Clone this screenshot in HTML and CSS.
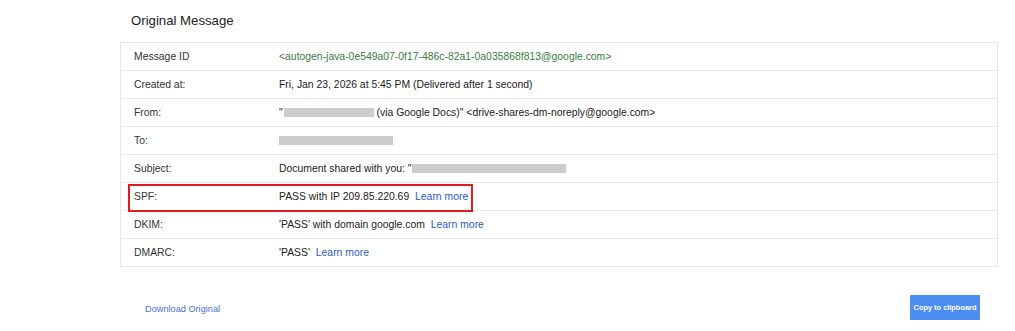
FILE: index.html
```html
<!DOCTYPE html>
<html lang="en">
<head>
  <meta charset="UTF-8">
  <title>Original Message</title>
  <link rel="stylesheet" href="styles.css">
</head>
<body>
  <article class="original">
    <h2 class="title">Original Message</h2>
    <div class="details">
      <table>
        <tr>
          <th>Message ID</th>
          <td class="msgid">&lt;autogen-java-0e549a07-0f17-486c-82a1-0a035868f813@google.com&gt;</td>
        </tr>
        <tr>
          <th>Created at:</th>
          <td>Fri, Jan 23, 2026 at 5:45 PM (Delivered after 1 second)</td>
        </tr>
        <tr>
          <th>From:</th>
          <td>"<span class="redact from-name"></span> (via Google Docs)" &lt;drive-shares-dm-noreply@google.com&gt;</td>
        </tr>
        <tr>
          <th>To:</th>
          <td><span class="redact to-addr"></span></td>
        </tr>
        <tr>
          <th>Subject:</th>
          <td>Document shared with you: "<span class="redact subject"></span></td>
        </tr>
        <tr class="spf">
          <th>SPF:</th>
          <td>PASS with IP 209.85.220.69 <a href="#">Learn more</a></td>
        </tr>
        <tr>
          <th>DKIM:</th>
          <td>'PASS' with domain google.com <a href="#">Learn more</a></td>
        </tr>
        <tr>
          <th>DMARC:</th>
          <td>'PASS' <a href="#">Learn more</a></td>
        </tr>
      </table>
      <!-- annotation drawn over the SPF row -->
      <div class="highlight"></div>
    </div>

    <div class="actions">
      <a href="#" class="download">Download Original</a>
      <button type="button" class="copy">Copy to clipboard</button>
    </div>
  </article>
</body>
</html>
```

FILE: styles.css
```css
body {
  margin: 0;
  background-color: #fff;
  font-family: "Liberation Sans", Arial, sans-serif;
  color: #222;
}

.original {
  width: 878px;
  margin-left: 120px;
}

.title {
  margin: 0;
  padding: 13px 0 0 11px;
  height: 29px;
  font-size: 13.2px;
  font-weight: normal;
  color: #222;
}

.details {
  position: relative;
}

table {
  width: 100%;
  border-collapse: collapse;
  border: 1px solid #e8e8e8;
  font-size: 10.4px;
}

tr {
  height: 28px;
  border-bottom: 1px solid #e8e8e8;
}

th,
td {
  padding: 0;
  text-align: left;
  font-weight: normal;
  white-space: nowrap;
}

th {
  width: 145px;
  padding-left: 13px;
  color: #333;
}

td a {
  margin-left: 3px;
  color: #2a5bd7;
  text-decoration: none;
}

.msgid {
  color: #38803f;
}

.redact {
  display: inline-block;
  height: 9px;
  vertical-align: -1px;
  background-color: #cdcdcd;
  filter: blur(0.6px);
}

.from-name {
  width: 90px;
  margin-left: 1px;
}

.to-addr {
  width: 114px;
}

.subject {
  width: 154px;
  margin-left: 1px;
}

.highlight {
  position: absolute;
  left: 8px;
  top: 142px;
  width: 341px;
  height: 24px;
  border: 2px solid #e31b1e;
}

.actions {
  display: flex;
  justify-content: space-between;
  align-items: center;
  padding: 28px 18px 0 25px;
}

.download {
  font-size: 9.2px;
  color: #4a6fdc;
  text-decoration: none;
  margin-top: 2px;
}

.copy {
  width: 70px;
  height: 25px;
  padding: 0;
  border: none;
  border-radius: 1px;
  background-color: #4b8df2;
  color: #fff;
  font-family: inherit;
  font-size: 7.4px;
  font-weight: bold;
}
```
